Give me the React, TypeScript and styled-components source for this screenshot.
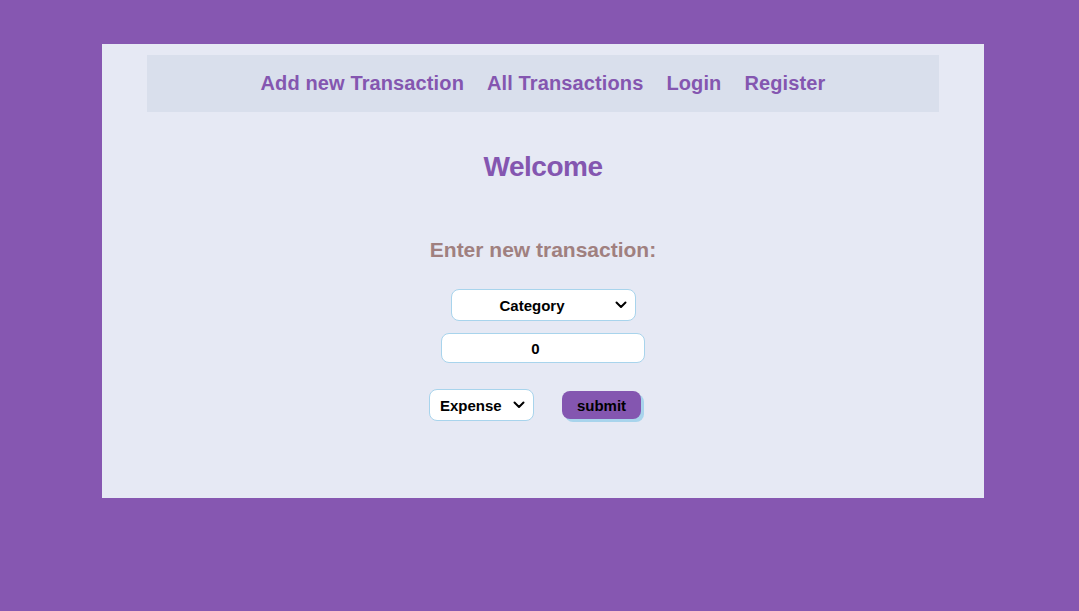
import React from "react";
import styled, { createGlobalStyle } from "styled-components";

const Global = createGlobalStyle`
  html, body { margin: 0; padding: 0; }
  body {
    background: #8657b1;
    font-family: "Liberation Sans", Arial, sans-serif;
    min-height: 611px;
  }
`;

const Page = styled.div`
  padding: 44px 95px 0 102px;
`;

const Card = styled.main`
  background: #e6e9f4;
  height: 454px;
  padding: 11px 45px 0;
  box-sizing: border-box;
  display: flex;
  flex-direction: column;
  align-items: center;
`;

const Nav = styled.nav`
  align-self: stretch;
  height: 57px;
  background: #d9dfec;
  display: flex;
  justify-content: center;
  align-items: center;
  gap: 23px;
`;

const NavLink = styled.a`
  color: #8456b0;
  font-weight: bold;
  font-size: 20px;
  letter-spacing: 0.12px;
  text-decoration: none;
  cursor: pointer;
`;

const Title = styled.h1`
  margin: 39px 0 0;
  font-family: "Comic Sans MS", "Liberation Sans", sans-serif;
  font-size: 28px;
  font-weight: bold;
  color: #8456b0;
  line-height: 32px;
  letter-spacing: -0.5px;
`;

const Subtitle = styled.h3`
  margin: 55px 0 0;
  font-size: 21px;
  font-weight: bold;
  color: #a0807f;
  line-height: 24px;
`;

const Form = styled.form`
  margin-top: 27px;
  display: flex;
  flex-direction: column;
  align-items: center;
`;

const SelectWrap = styled.div<{ $w: number }>`
  position: relative;
  width: ${(p) => p.$w}px;
  height: 32px;
`;

const Select = styled.select<{ $center?: boolean }>`
  appearance: none;
  -webkit-appearance: none;
  width: 100%;
  height: 100%;
  box-sizing: border-box;
  background: #fff;
  border: 1px solid #a8d4ec;
  border-radius: 8px;
  font-family: "Liberation Sans", Arial, sans-serif;
  font-weight: bold;
  font-size: 15px;
  color: #000;
  padding: 0 28px 0 ${(p) => (p.$center ? 6 : 10)}px;
  text-align: ${(p) => (p.$center ? "center" : "left")};
  text-align-last: ${(p) => (p.$center ? "center" : "left")};
  outline: none;
  cursor: pointer;
`;

const Chevron = styled.svg`
  position: absolute;
  right: 9px;
  top: 50%;
  width: 12px;
  height: 8px;
  margin-top: -4px;
  pointer-events: none;
`;

const AmountInput = styled.input`
  margin-top: 12px;
  width: 204px;
  height: 30px;
  box-sizing: border-box;
  background: #fff;
  border: 1px solid #a8d4ec;
  border-radius: 8px;
  font-family: "Liberation Sans", Arial, sans-serif;
  font-weight: bold;
  font-size: 15px;
  text-align: center;
  color: #000;
  outline: none;
`;

const Row = styled.div`
  margin-top: 26px;
  display: flex;
  align-items: center;
  gap: 28px;
  padding-right: 16px;
`;

const Submit = styled.button`
  width: 79px;
  height: 28px;
  background: #8456b0;
  color: #000;
  border: none;
  border-radius: 8px;
  box-shadow: 3px 3px 0 #a8d4ec;
  font-family: "Liberation Sans", Arial, sans-serif;
  font-weight: bold;
  font-size: 15px;
  cursor: pointer;
  padding: 0;
`;

const Arrow = () => (
  <Chevron viewBox="0 0 12 8">
    <path d="M1.5 1.5 L6 6 L10.5 1.5" fill="none" stroke="#000" strokeWidth="2" strokeLinecap="round" strokeLinejoin="round" />
  </Chevron>
);

export default function App() {
  return (
    <>
      <Global />
      <Page>
        <Card>
          <Nav>
            <NavLink>Add new Transaction</NavLink>
            <NavLink>All Transactions</NavLink>
            <NavLink>Login</NavLink>
            <NavLink>Register</NavLink>
          </Nav>
          <Title>Welcome</Title>
          <Subtitle>Enter new transaction:</Subtitle>
          <Form onSubmit={(e) => e.preventDefault()}>
            <SelectWrap $w={185}>
              <Select $center defaultValue="">
                <option value="">Category</option>
                <option value="food">Food</option>
                <option value="rent">Rent</option>
              </Select>
              <Arrow />
            </SelectWrap>
            <AmountInput type="number" defaultValue={0} />
            <Row>
              <SelectWrap $w={105}>
                <Select defaultValue="expense">
                  <option value="expense">Expense</option>
                  <option value="income">Income</option>
                </Select>
                <Arrow />
              </SelectWrap>
              <Submit type="submit">submit</Submit>
            </Row>
          </Form>
        </Card>
      </Page>
    </>
  );
}
